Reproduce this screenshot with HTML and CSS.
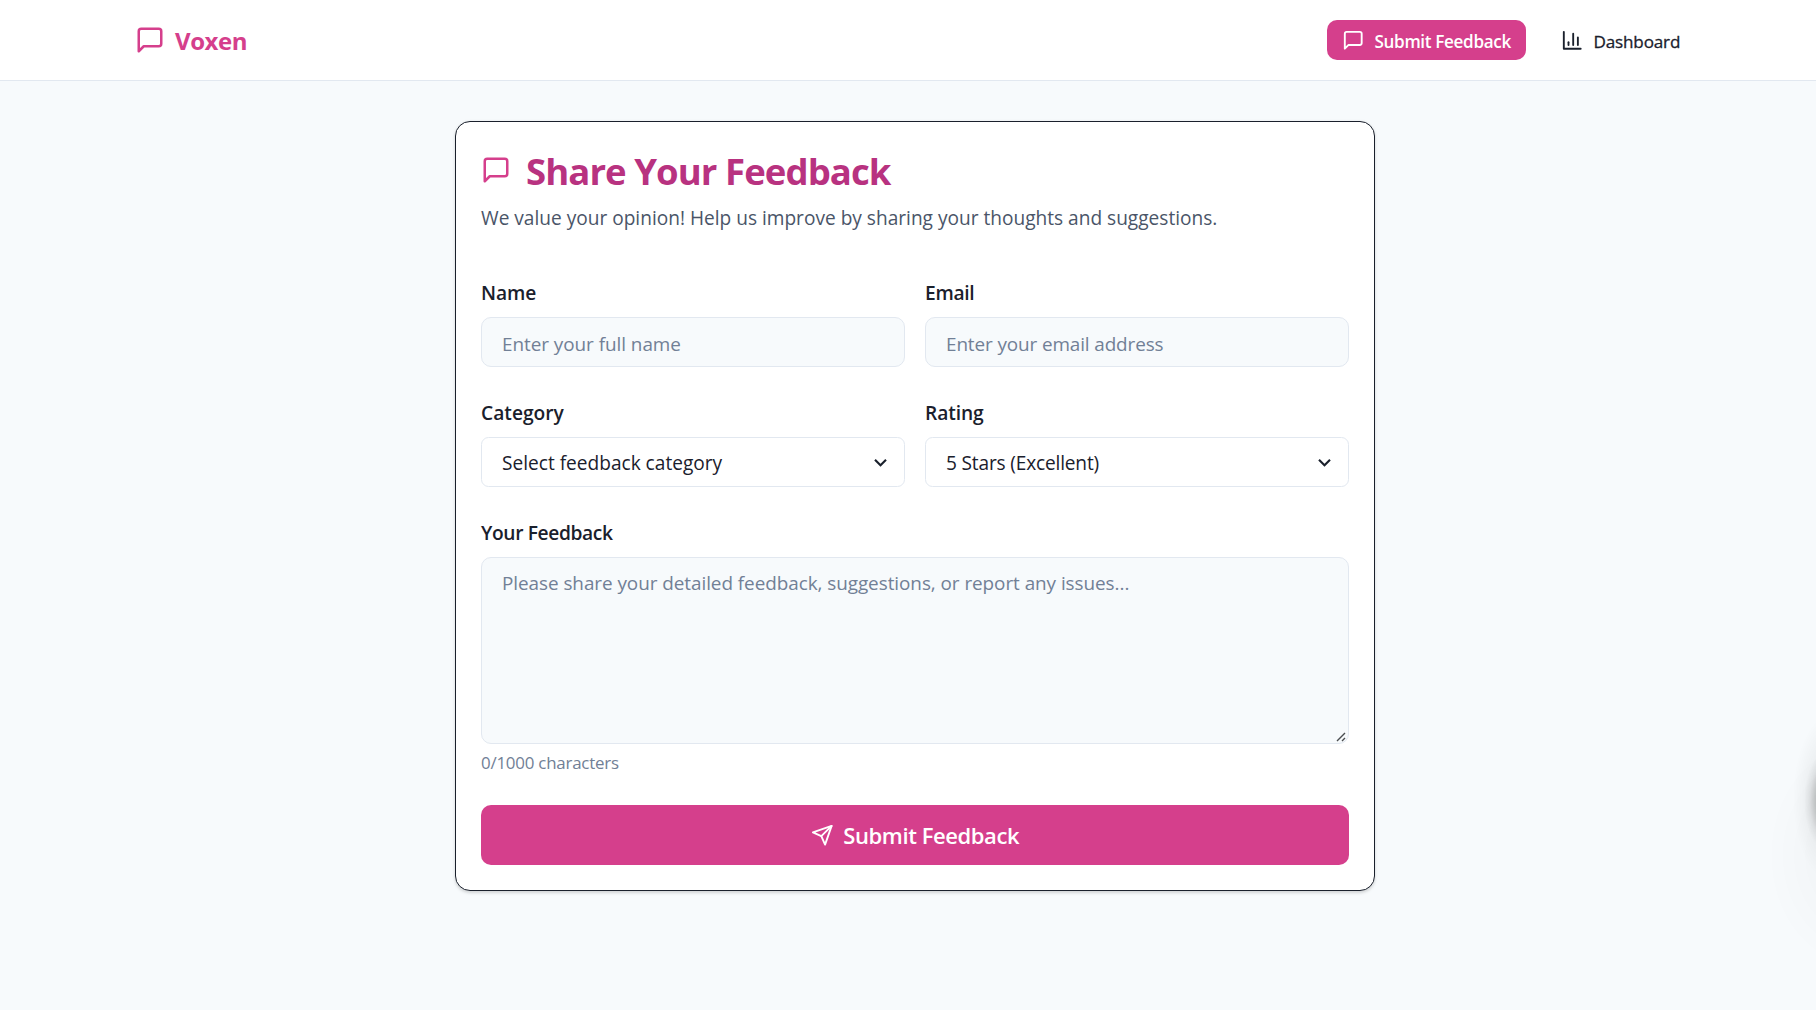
FILE: index.html
```
<!DOCTYPE html>
<html lang="en">
<head>
<meta charset="utf-8">
<title>Voxen</title>
<link rel="stylesheet" href="styles.css">
</head>
<body>
<header class="topbar">
  <a class="brand">
    <svg class="icon icon-lg" viewBox="0 0 24 24"><path d="M21 15a2 2 0 0 1-2 2H7l-4 4V5a2 2 0 0 1 2-2h14a2 2 0 0 1 2 2z"/></svg>
    <span class="brand-name">Voxen</span>
  </a>
  <nav class="nav">
    <a class="nav-link nav-link-active">
      <svg class="icon" viewBox="0 0 24 24"><path d="M21 15a2 2 0 0 1-2 2H7l-4 4V5a2 2 0 0 1 2-2h14a2 2 0 0 1 2 2z"/></svg>
      <span class="nav-text">Submit Feedback</span>
    </a>
    <a class="nav-link nav-link-plain">
      <svg class="icon" viewBox="0 0 24 24"><path d="M3 3v18h18"/><path d="M18 17V9"/><path d="M13 17V5"/><path d="M8 17v-3"/></svg>
      <span class="nav-text">Dashboard</span>
    </a>
  </nav>
</header>
<main class="card">
  <div class="card-title">
    <svg class="icon icon-lg" viewBox="0 0 24 24"><path d="M21 15a2 2 0 0 1-2 2H7l-4 4V5a2 2 0 0 1 2-2h14a2 2 0 0 1 2 2z"/></svg>
    <h1 class="heading">Share Your Feedback</h1>
  </div>
  <p class="subtitle">We value your opinion! Help us improve by sharing your thoughts and suggestions.</p>
  <form class="form">
    <div class="row">
      <div class="field">
        <label class="label" for="name">Name</label>
        <input class="control input" id="name" placeholder="Enter your full name">
      </div>
      <div class="field">
        <label class="label label-tight" for="email">Email</label>
        <input class="control input input-email" id="email" placeholder="Enter your email address">
      </div>
    </div>
    <div class="row">
      <div class="field">
        <label class="label label-category" for="category">Category</label>
        <div class="select-wrap">
          <select class="control select" id="category"><option>Select feedback category</option></select>
          <svg class="chevron" viewBox="0 0 24 24"><path d="M16.59 8.59L12 13.17 7.41 8.59 6 10l6 6 6-6z"/></svg>
        </div>
      </div>
      <div class="field">
        <label class="label" for="rating">Rating</label>
        <div class="select-wrap">
          <select class="control select select-rating" id="rating"><option>5 Stars (Excellent)</option></select>
          <svg class="chevron" viewBox="0 0 24 24"><path d="M16.59 8.59L12 13.17 7.41 8.59 6 10l6 6 6-6z"/></svg>
        </div>
      </div>
    </div>
    <div class="field">
      <label class="label label-long" for="feedback">Your Feedback</label>
      <div class="textarea-wrap">
        <textarea class="control textarea" id="feedback" placeholder="Please share your detailed feedback, suggestions, or report any issues..."></textarea>
        <svg class="grip" viewBox="0 0 10 10"><path d="M1 9 9 1M6 9 9 6"/></svg>
      </div>
      <div class="counter">0/1000 characters</div>
    </div>
    <button class="submit" type="button">
      <svg class="icon" viewBox="0 0 24 24"><path d="m22 2-7 20-4-9-9-4Z"/><path d="M22 2 11 13"/></svg>
      <span>Submit Feedback</span>
    </button>
  </form>
</main>
<div class="edge-shadow"></div>
</body>
</html>
```
FILE: styles.css
```
* { box-sizing: border-box; }
body {
  margin: 0;
  min-height: 100vh;
  background: #f7fafc;
  color: #1a202c;
  font-family: "Open Sans", "Noto Sans", sans-serif;
  font-size: 19px;
}
.icon {
  width: 22.5px;
  height: 22.5px;
  flex: none;
  fill: none;
  stroke: currentColor;
  stroke-width: 2;
  stroke-linecap: round;
  stroke-linejoin: round;
}
.icon-lg { width: 30px; height: 30px; }

.topbar {
  display: flex;
  align-items: center;
  justify-content: space-between;
  height: 81px;
  padding: 0 120px 0 135px;
  background: #fff;
  border-bottom: 1px solid #e2e8f0;
}
.brand { display: flex; align-items: center; gap: 10px; color: #d53f8c; }
.brand-name { padding-top: 2px; font-size: 24px; font-weight: 700; line-height: 32px; letter-spacing: -0.45px; }
.nav { display: flex; gap: 20px; }
.nav-link {
  display: flex;
  align-items: center;
  gap: 10px;
  height: 40px;
  padding: 1px 15px 0;
  border-radius: 10px;
  font-size: 17.1px;
  white-space: nowrap;
}
.nav-text { padding-top: 2px; }
.nav-link-active { width: 199px; background: #d53f8c; color: #fff; font-weight: 600; letter-spacing: -0.34px; }
.nav-link-plain { width: 150px; font-weight: 500; letter-spacing: -0.17px; }
.nav-link-plain .nav-text { -webkit-text-stroke: 0.3px currentColor; }

.card {
  width: 920px;
  margin: 40px auto 0 455px;
  padding: 25px;
  background: #fff;
  border: 1px solid #1a202c;
  border-radius: 15px;
  box-shadow: 0 1.25px 3.75px rgba(0, 0, 0, 0.1), 0 1.25px 2.5px rgba(0, 0, 0, 0.06);
}
.card-title { display: flex; align-items: center; gap: 15px; height: 50px; color: #d53f8c; }
.card-title .icon { margin-bottom: 4px; }
.heading { margin: 0; padding-bottom: 2px; color: #b83280; font-size: 36.5px; font-weight: 700; line-height: 48px; letter-spacing: -0.92px; }
.subtitle { margin: 6px 0 44px; color: #4a5568; font-size: 19.1px; line-height: 30px; }
.form { display: flex; flex-direction: column; gap: 30px; }
.row { display: grid; grid-template-columns: 1fr 1fr; gap: 20px; }
.field { display: flex; flex-direction: column; }
.label { margin: 1px 0 9px; font-size: 19.2px; font-weight: 600; line-height: 30px; letter-spacing: -0.1px; }
.label-tight { letter-spacing: -0.3px; }
.label-category { letter-spacing: 0; }
.label-long { letter-spacing: -0.37px; }
.control {
  width: 100%;
  height: 50px;
  padding: 3px 20px 0;
  background: #f7fafc;
  border: 1px solid #e2e8f0;
  border-radius: 10px;
  color: inherit;
  font: inherit;
  font-size: 18.9px;
  letter-spacing: -0.04px;
  outline: none;
}
.control::placeholder { color: #718096; }
.input-email { letter-spacing: -0.11px; }
.select-wrap, .textarea-wrap { position: relative; }
.select {
  display: block;
  padding: 2px 20px 0;
  background: #fff;
  border-radius: 7.5px;
  font-size: 19.1px;
  letter-spacing: 0;
  appearance: none;
}
.select-rating { letter-spacing: -0.17px; }
.chevron { position: absolute; top: 13px; right: 12px; width: 25px; height: 25px; fill: #1a202c; pointer-events: none; }
.textarea { display: block; height: 187px; padding: 12px 20px; line-height: 27.5px; letter-spacing: -0.05px; resize: none; }
.grip { position: absolute; right: 3px; bottom: 2px; width: 10px; height: 10px; fill: none; stroke: #4a4d50; stroke-width: 1.4; pointer-events: none; }
.counter { height: 26px; margin-top: 5px; padding-top: 1px; color: #718096; font-size: 16.9px; line-height: 26px; letter-spacing: -0.22px; }
.submit {
  display: flex;
  align-items: center;
  justify-content: center;
  gap: 10px;
  width: 100%;
  height: 60px;
  padding: 0;
  border: 0;
  border-radius: 10px;
  background: #d53f8c;
  color: #fff;
  font: 600 22px/30px "Open Sans", "Noto Sans", sans-serif;
  letter-spacing: -0.42px;
}

.edge-shadow {
  position: fixed;
  top: 700px;
  right: 0;
  width: 60px;
  height: 260px;
  pointer-events: none;
  background:
    radial-gradient(ellipse 24px 50px at 72px 101px, rgba(0, 0, 0, 0.4), rgba(0, 0, 0, 0.2) 45%, rgba(0, 0, 0, 0.05) 78%, transparent),
    radial-gradient(ellipse 40px 85px at 77px 98px, rgba(0, 0, 0, 0.1), transparent),
    radial-gradient(ellipse 90px 115px at 100px 155px, rgba(0, 0, 0, 0.03), transparent);
}
```
